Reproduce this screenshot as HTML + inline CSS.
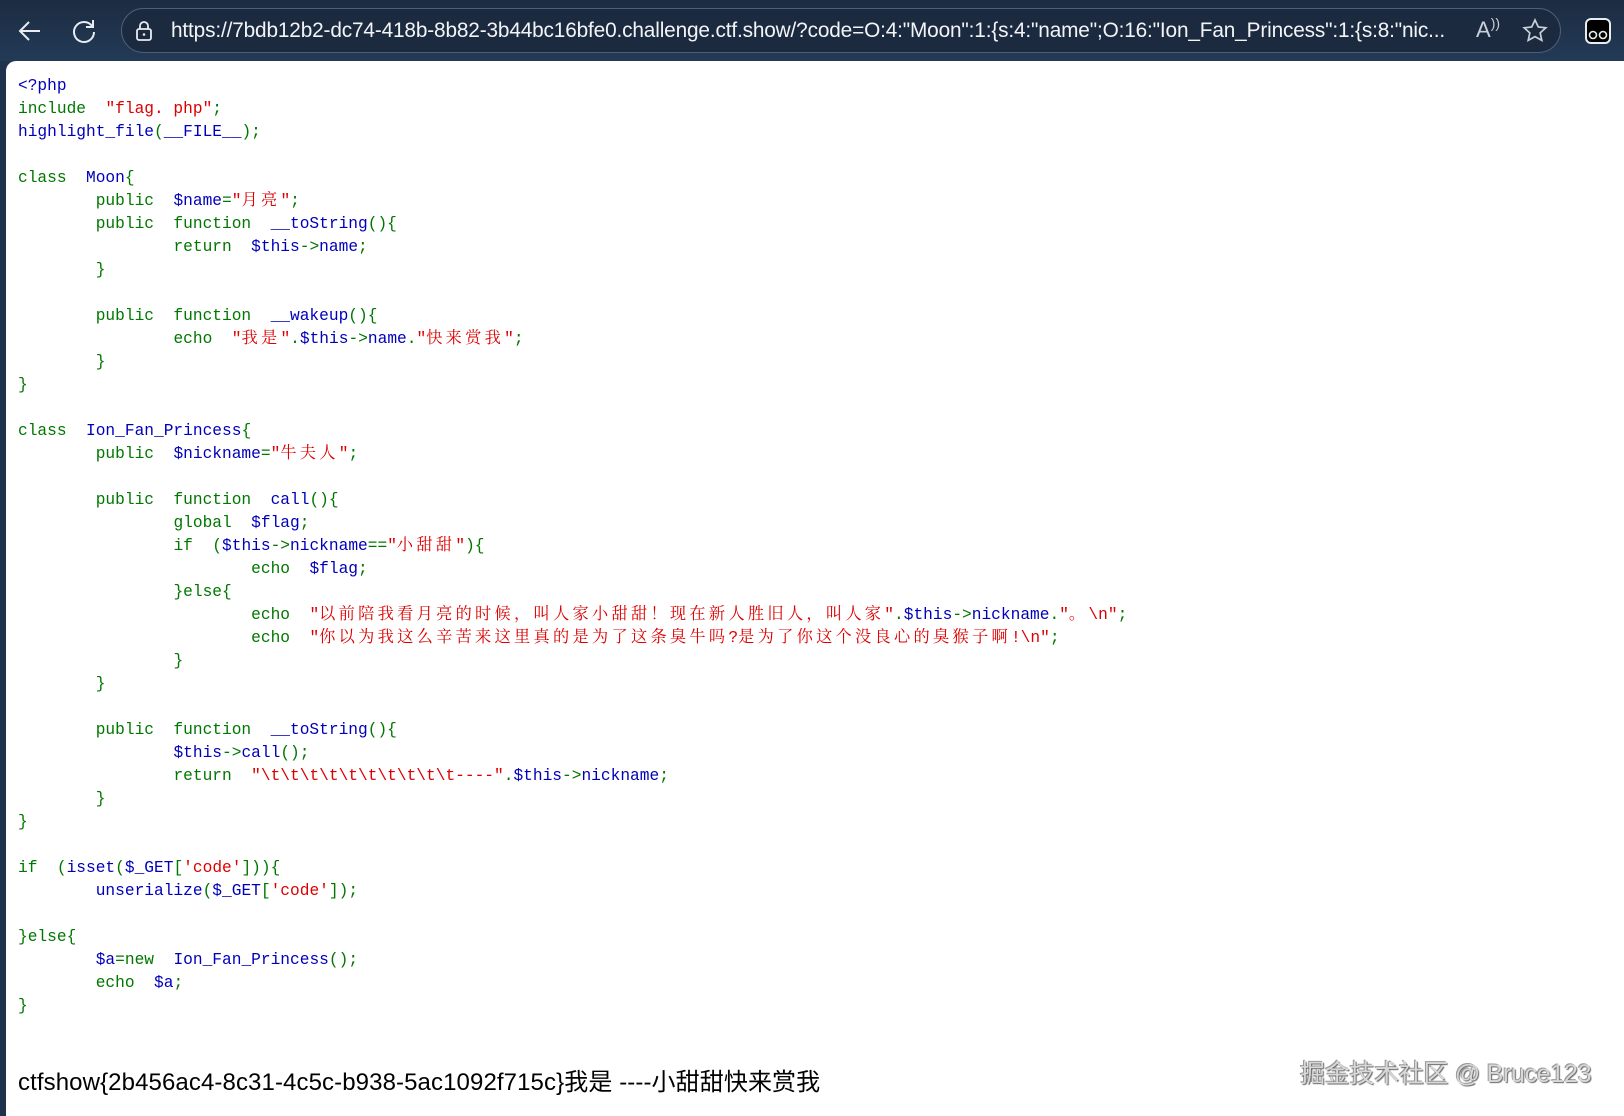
<!DOCTYPE html>
<html><head><meta charset="utf-8">
<style>
html,body{margin:0;padding:0;width:1624px;height:1116px;overflow:hidden;background:#1f324b;}
.bar{position:absolute;left:0;top:0;width:1624px;height:61px;background:linear-gradient(#1c2c42,#233a56);}
.pill{position:absolute;left:121px;top:8px;width:1440px;height:45px;border:1.5px solid #4d6078;border-radius:24px;background:#1b2a3f;box-sizing:border-box;}
.url{position:absolute;left:171px;top:19px;font:20.8px "Liberation Sans",sans-serif;color:#f2f4f7;white-space:nowrap;letter-spacing:-0.15px;}
.page{position:absolute;left:6px;top:61px;width:1618px;height:1055px;background:#fff;border-top-left-radius:10px;}
pre{position:absolute;left:18px;top:75px;margin:0;font:16.2px "Liberation Mono",monospace;line-height:23px;color:#0000BB;tab-size:8;}
pre span{line-height:10px;}
.g{color:#007700}.r{color:#DD0000}
.c{letter-spacing:3.3px;font-family:"Noto Serif CJK SC",serif;line-height:10px;}
.flag{position:absolute;left:18px;top:1062px;font:24px "Liberation Sans","Noto Sans CJK SC",sans-serif;color:#000;letter-spacing:0.1px;white-space:nowrap;}
.wm{position:absolute;left:1300px;top:1054px;font:25px "Liberation Sans","Noto Sans CJK SC",sans-serif;color:#d8d8d8;text-shadow:1px 1px 1px #666,-1px -1px 0 #999;white-space:nowrap;letter-spacing:-0.3px;}
</style></head><body>
<div class="bar"></div>
<svg style="position:absolute;left:16px;top:17px" width="28" height="28" viewBox="0 0 28 28"><path d="M24 14H5M13 5l-9 9 9 9" fill="none" stroke="#e8ecf1" stroke-width="2"/></svg>
<svg style="position:absolute;left:70px;top:17px" width="28" height="28" viewBox="0 0 28 28"><path d="M22 9A10 10 0 1 0 24 15M23 3v7h-7" fill="none" stroke="#e8ecf1" stroke-width="2"/></svg>
<div class="pill"></div>
<svg style="position:absolute;left:134px;top:20px" width="20" height="22" viewBox="0 0 20 22"><rect x="3" y="9" width="14" height="11" rx="2" fill="none" stroke="#e8ecf1" stroke-width="1.8"/><path d="M6 9V6a4 4 0 0 1 8 0v3" fill="none" stroke="#e8ecf1" stroke-width="1.8"/><circle cx="10" cy="14.5" r="1.3" fill="#e8ecf1"/></svg>
<div class="url">https://7bdb12b2-dc74-418b-8b82-3b44bc16bfe0.challenge.ctf.show/?code=O:4:"Moon":1:{s:4:"name";O:16:"Ion_Fan_Princess":1:{s:8:"nic...</div>
<div style="position:absolute;left:1476px;top:17px;font:22px 'Liberation Sans',sans-serif;color:#c9d0d9">A<span style="font-size:14px;position:relative;top:-9px">))</span></div>
<svg style="position:absolute;left:1521px;top:17px" width="28" height="28" viewBox="0 0 28 28"><path d="M14 3l3.3 7 7.5.8-5.6 5.1 1.6 7.5L14 19.6l-6.8 3.8 1.6-7.5L3.2 10.8l7.5-.8z" fill="none" stroke="#c9d0d9" stroke-width="1.7"/></svg>
<svg style="position:absolute;left:1584px;top:17px" width="28" height="28" viewBox="0 0 28 28"><rect x="2" y="2" width="24" height="24" rx="5" fill="#000" stroke="#e8ecf1" stroke-width="2"/><circle cx="9" cy="18" r="3.5" fill="none" stroke="#e8ecf1" stroke-width="1.6"/><circle cx="19" cy="18" r="3.5" fill="none" stroke="#e8ecf1" stroke-width="1.6"/></svg>
<div class="page"></div>
<pre>&lt;?php
<span class="g">include  </span><span class="r">"flag. php"</span><span class="g">;</span>
highlight_file<span class="g">(</span>__FILE__<span class="g">);</span>

<span class="g">class  </span>Moon<span class="g">{</span>
<span class="g">	public  </span>$name<span class="g">=</span><span class="r">"<span class="c">月亮</span>"</span><span class="g">;</span>
<span class="g">	public  function  </span>__toString<span class="g">(){</span>
<span class="g">		return  </span>$this<span class="g">-&gt;</span>name<span class="g">;</span>
<span class="g">	}</span>

<span class="g">	public  function  </span>__wakeup<span class="g">(){</span>
<span class="g">		echo  </span><span class="r">"<span class="c">我是</span>"</span><span class="g">.</span>$this<span class="g">-&gt;</span>name<span class="g">.</span><span class="r">"<span class="c">快来赏我</span>"</span><span class="g">;</span>
<span class="g">	}</span>
<span class="g">}</span>

<span class="g">class  </span>Ion_Fan_Princess<span class="g">{</span>
<span class="g">	public  </span>$nickname<span class="g">=</span><span class="r">"<span class="c">牛夫人</span>"</span><span class="g">;</span>

<span class="g">	public  function  </span>call<span class="g">(){</span>
<span class="g">		global  </span>$flag<span class="g">;</span>
<span class="g">		if  (</span>$this<span class="g">-&gt;</span>nickname<span class="g">==</span><span class="r">"<span class="c">小甜甜</span>"</span><span class="g">){</span>
<span class="g">			echo  </span>$flag<span class="g">;</span>
<span class="g">		}else{</span>
<span class="g">			echo  </span><span class="r">"<span class="c">以前陪我看月亮的时候，叫人家小甜甜！现在新人胜旧人，叫人家</span>"</span><span class="g">.</span>$this<span class="g">-&gt;</span>nickname<span class="g">.</span><span class="r">"<span class="c">。</span>\n"</span><span class="g">;</span>
<span class="g">			echo  </span><span class="r">"<span class="c">你以为我这么辛苦来这里真的是为了这条臭牛吗</span>?<span class="c">是为了你这个没良心的臭猴子啊</span>!\n"</span><span class="g">;</span>
<span class="g">		}</span>
<span class="g">	}</span>

<span class="g">	public  function  </span>__toString<span class="g">(){</span>
		$this<span class="g">-&gt;</span>call<span class="g">();</span>
<span class="g">		return  </span><span class="r">"\t\t\t\t\t\t\t\t\t\t----"</span><span class="g">.</span>$this<span class="g">-&gt;</span>nickname<span class="g">;</span>
<span class="g">	}</span>
<span class="g">}</span>

<span class="g">if  (</span>isset<span class="g">(</span>$_GET<span class="g">[</span><span class="r">'code'</span><span class="g">])){</span>
	unserialize<span class="g">(</span>$_GET<span class="g">[</span><span class="r">'code'</span><span class="g">]);</span>

<span class="g">}else{</span>
	$a<span class="g">=new  </span>Ion_Fan_Princess<span class="g">();</span>
<span class="g">	echo  </span>$a<span class="g">;</span>
<span class="g">}</span></pre>
<div class="flag">ctfshow{2b456ac4-8c31-4c5c-b938-5ac1092f715c}我是 ----小甜甜快来赏我</div>
<div class="wm">掘金技术社区 @ Bruce123</div>
</body></html>
